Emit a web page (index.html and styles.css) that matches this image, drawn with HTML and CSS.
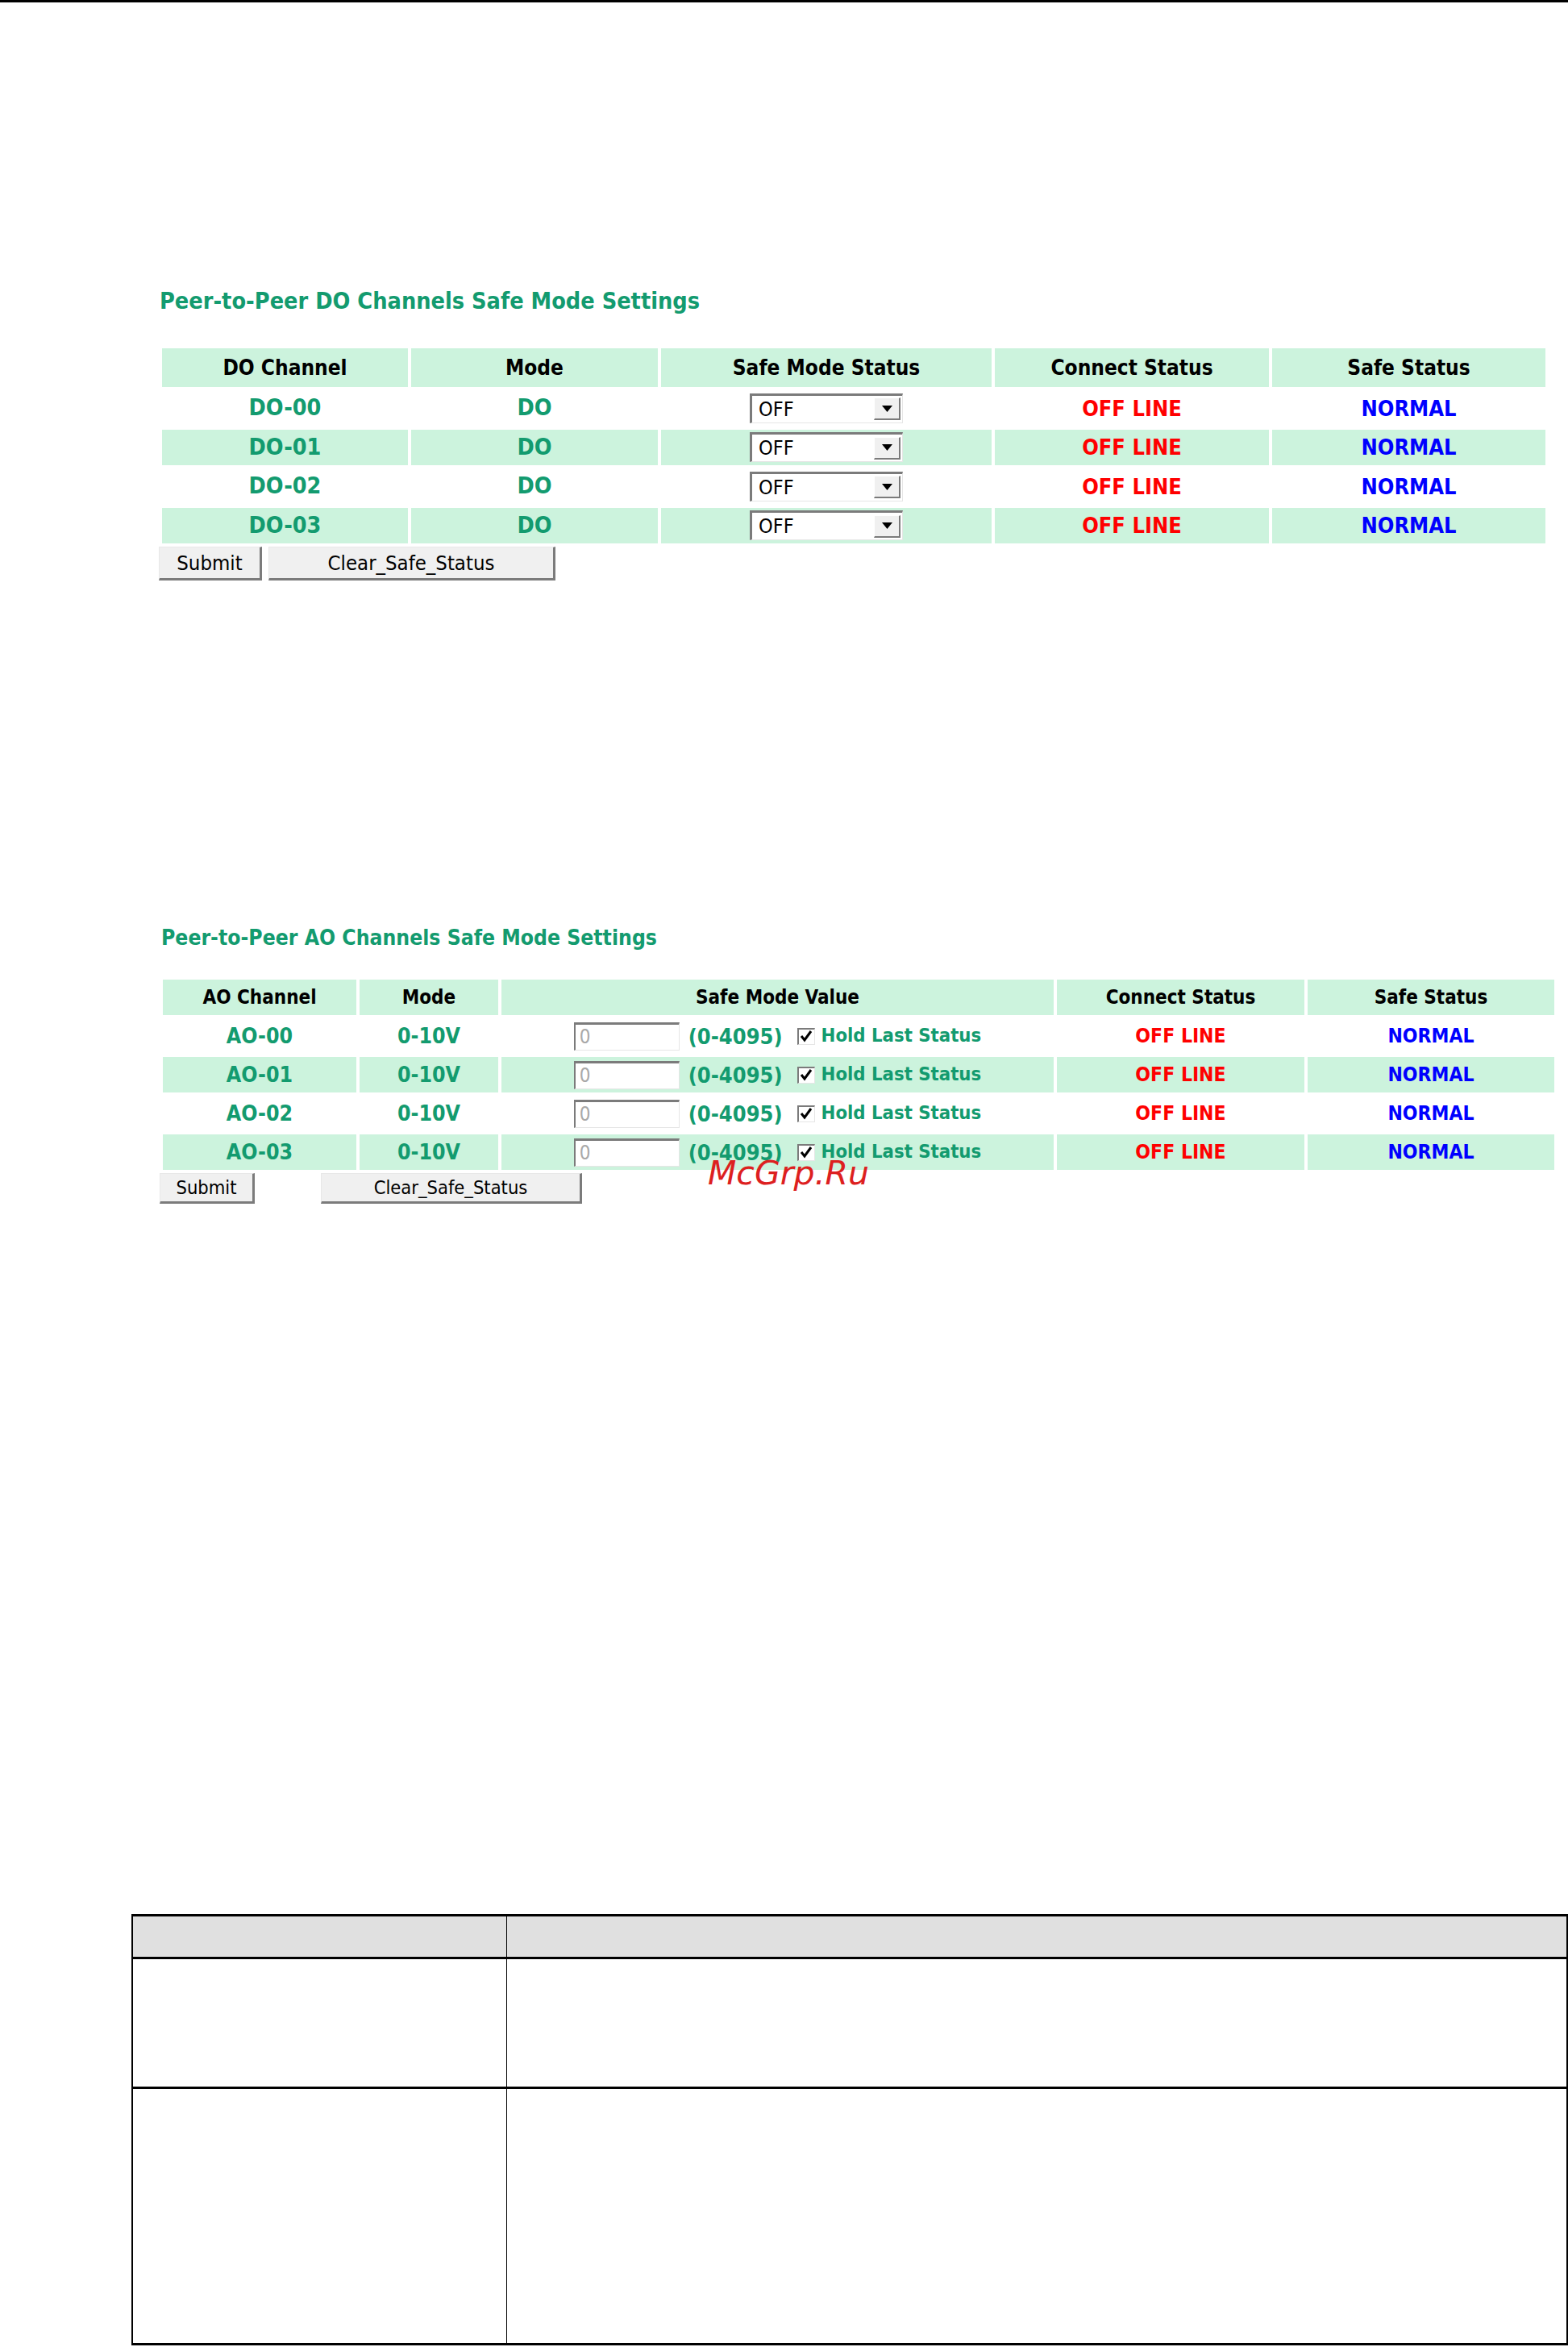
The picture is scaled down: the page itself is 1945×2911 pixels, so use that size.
FILE: index.html
```html
<!DOCTYPE html>
<html lang="en">
<head>
<meta charset="utf-8">
<title>Peer-to-Peer Safe Mode Settings</title>
<link rel="stylesheet" href="styles.css">
</head>
<body>
<div class="topline"></div>

<section class="do-section">
  <h2 class="title title-do">Peer-to-Peer DO Channels Safe Mode Settings</h2>
  <table class="grid grid-do">
    <thead>
      <tr>
        <th class="c1">DO Channel</th>
        <th class="c2">Mode</th>
        <th class="c3">Safe Mode Status</th>
        <th class="c4">Connect Status</th>
        <th class="c5">Safe Status</th>
      </tr>
    </thead>
    <tbody>
      <tr>
        <td class="g">DO-00</td><td class="g">DO</td>
        <td><span class="select"><span class="sel-text">OFF</span><span class="sel-btn"><svg width="13" height="8" viewBox="0 0 13 8"><path d="M0 0H13L6.5 8Z" fill="#000"/></svg></span></span></td>
        <td class="r">OFF LINE</td><td class="b">NORMAL</td>
      </tr>
      <tr class="alt">
        <td class="g">DO-01</td><td class="g">DO</td>
        <td><span class="select"><span class="sel-text">OFF</span><span class="sel-btn"><svg width="13" height="8" viewBox="0 0 13 8"><path d="M0 0H13L6.5 8Z" fill="#000"/></svg></span></span></td>
        <td class="r">OFF LINE</td><td class="b">NORMAL</td>
      </tr>
      <tr>
        <td class="g">DO-02</td><td class="g">DO</td>
        <td><span class="select"><span class="sel-text">OFF</span><span class="sel-btn"><svg width="13" height="8" viewBox="0 0 13 8"><path d="M0 0H13L6.5 8Z" fill="#000"/></svg></span></span></td>
        <td class="r">OFF LINE</td><td class="b">NORMAL</td>
      </tr>
      <tr class="alt">
        <td class="g">DO-03</td><td class="g">DO</td>
        <td><span class="select"><span class="sel-text">OFF</span><span class="sel-btn"><svg width="13" height="8" viewBox="0 0 13 8"><path d="M0 0H13L6.5 8Z" fill="#000"/></svg></span></span></td>
        <td class="r">OFF LINE</td><td class="b">NORMAL</td>
      </tr>
    </tbody>
  </table>
  <div class="buttons buttons-do">
    <button class="btn btn-submit-do">Submit</button>
    <button class="btn btn-clear-do">Clear_Safe_Status</button>
  </div>
</section>

<section class="ao-section">
  <h2 class="title title-ao">Peer-to-Peer AO Channels Safe Mode Settings</h2>
  <table class="grid grid-ao">
    <thead>
      <tr>
        <th class="a1">AO Channel</th>
        <th class="a2">Mode</th>
        <th class="a3">Safe Mode Value</th>
        <th class="a4">Connect Status</th>
        <th class="a5">Safe Status</th>
      </tr>
    </thead>
    <tbody>
      <tr>
        <td class="g">AO-00</td><td class="g">0-10V</td>
        <td><span class="value"><span class="input">0</span><span class="range">(0-4095)</span><span class="check"><svg width="22" height="21" viewBox="0 0 22 21"><path d="M5 10 L9 15 L17 4" fill="none" stroke="#000" stroke-width="3"/></svg></span><span class="hold">Hold Last Status</span></span></td>
        <td class="r">OFF LINE</td><td class="b">NORMAL</td>
      </tr>
      <tr class="alt">
        <td class="g">AO-01</td><td class="g">0-10V</td>
        <td><span class="value"><span class="input">0</span><span class="range">(0-4095)</span><span class="check"><svg width="22" height="21" viewBox="0 0 22 21"><path d="M5 10 L9 15 L17 4" fill="none" stroke="#000" stroke-width="3"/></svg></span><span class="hold">Hold Last Status</span></span></td>
        <td class="r">OFF LINE</td><td class="b">NORMAL</td>
      </tr>
      <tr>
        <td class="g">AO-02</td><td class="g">0-10V</td>
        <td><span class="value"><span class="input">0</span><span class="range">(0-4095)</span><span class="check"><svg width="22" height="21" viewBox="0 0 22 21"><path d="M5 10 L9 15 L17 4" fill="none" stroke="#000" stroke-width="3"/></svg></span><span class="hold">Hold Last Status</span></span></td>
        <td class="r">OFF LINE</td><td class="b">NORMAL</td>
      </tr>
      <tr class="alt">
        <td class="g">AO-03</td><td class="g">0-10V</td>
        <td><span class="value"><span class="input">0</span><span class="range">(0-4095)</span><span class="check"><svg width="22" height="21" viewBox="0 0 22 21"><path d="M5 10 L9 15 L17 4" fill="none" stroke="#000" stroke-width="3"/></svg></span><span class="hold">Hold Last Status</span></span></td>
        <td class="r">OFF LINE</td><td class="b">NORMAL</td>
      </tr>
    </tbody>
  </table>
  <div class="buttons buttons-ao">
    <button class="btn btn-submit-ao">Submit</button>
    <button class="btn btn-clear-ao">Clear_Safe_Status</button>
  </div>
  <div class="watermark">McGrp.Ru</div>
</section>

<div class="spec">
  <div class="spec-row spec-head">
    <div class="spec-c1"></div>
    <div class="spec-c2"></div>
  </div>
  <div class="spec-row spec-r1">
    <div class="spec-c1"></div>
    <div class="spec-c2"></div>
  </div>
  <div class="spec-row spec-r2">
    <div class="spec-c1"></div>
    <div class="spec-c2"></div>
  </div>
</div>
</body>
</html>
```

FILE: styles.css
```css
html, body {
  margin: 0;
  padding: 0;
  background: #ffffff;
}
body {
  font-family: "DejaVu Sans Condensed", "DejaVu Sans", sans-serif;
  font-stretch: condensed;
  color: #000;
  width: 1945px;
}
.topline {
  height: 3px;
  background: #000;
}

.title {
  margin: 0;
  font-weight: bold;
  color: #139b6f;
  white-space: nowrap;
}
.title-do {
  margin: 353px 0 0 198px;
  font-size: 28.6px;
  line-height: 34px;
}
.title-ao {
  margin: 427px 0 0 200px;
  font-size: 26.3px;
  line-height: 32px;
}

.grid {
  border-collapse: separate;
  border-spacing: 4px;
  table-layout: fixed;
}
.grid th, .grid td {
  padding: 0;
  text-align: center;
  vertical-align: middle;
  white-space: nowrap;
  line-height: 1;
}
.grid th {
  background: #ccf3dd;
  font-weight: bold;
  color: #000;
}
.grid td {
  font-weight: bold;
}
.grid tr.alt td {
  background: #ccf3dd;
}

.grid-do {
  margin: 38px 0 0 197px;
  width: 1724px;
}
.grid-do th { height: 48px; font-size: 26px; }
.grid-do td { height: 44.5px; font-size: 27px; }
.grid-do td.g { font-size: 28.5px; }
.c1 { width: 305px; }
.c2 { width: 306px; }
.c3 { width: 410px; }
.c4 { width: 340px; }
.c5 { width: 339px; }

.grid-ao {
  margin: 32px 0 0 198px;
  width: 1734px;
}
.grid-ao th { height: 44px; font-size: 24px; }
.grid-ao td { height: 44px; font-size: 24.5px; }
.grid-ao td.g { font-size: 26.5px; }
.a1 { width: 240px; }
.a2 { width: 172px; }
.a3 { width: 685px; }
.a4 { width: 307px; }
.a5 { width: 306px; }

.g { color: #139b6f; }
.r { color: #ff0000; }
.b { color: #0000ff; }

/* fake select */
.select {
  display: inline-flex;
  align-items: center;
  box-sizing: border-box;
  width: 190px;
  height: 37px;
  vertical-align: middle;
  background: #fff;
  border-style: solid;
  border-width: 3px 1px 1px 3px;
  border-color: #7b7b7b #e6e6e6 #e6e6e6 #7b7b7b;
}
.sel-text {
  padding-left: 8px;
  font-weight: normal;
  font-size: 25px;
  color: #000;
}
.sel-btn {
  margin-left: auto;
  margin-right: 2px;
  box-sizing: border-box;
  width: 33px;
  height: 28px;
  display: flex;
  align-items: center;
  justify-content: center;
  background: #f0f0f0;
  border-style: solid;
  border-width: 1px 2px 2px 1px;
  border-color: #ffffff #7b7b7b #7b7b7b #ffffff;
}

/* AO value cell */
.value {
  display: inline-flex;
  align-items: center;
  vertical-align: middle;
}
.input {
  box-sizing: border-box;
  width: 131px;
  height: 35px;
  display: inline-flex;
  align-items: center;
  padding-left: 5px;
  background: #fff;
  border-style: solid;
  border-width: 3px 1px 1px 2px;
  border-color: #7b7b7b #e6e6e6 #e6e6e6 #7b7b7b;
  color: #a9a9a9;
  font-weight: normal;
  font-size: 24px;
  text-align: left;
}
.range {
  margin-left: 11px;
  color: #139b6f;
  font-size: 27px;
}
.check {
  margin-left: 18px;
  box-sizing: border-box;
  width: 22px;
  height: 21px;
  display: inline-flex;
  background: #fff;
  border-style: solid;
  border-width: 2px 1px 1px 2px;
  border-color: #7b7b7b #e6e6e6 #e6e6e6 #7b7b7b;
  overflow: hidden;
}
.check svg {
  margin: -2px 0 0 -2px;
  flex: none;
}
.hold {
  margin-left: 8px;
  color: #139b6f;
  font-size: 23.7px;
}

/* buttons */
.buttons {
  display: flex;
  align-items: flex-start;
}
.buttons-do {
  margin-left: 197px;
  gap: 8px;
}
.buttons-ao {
  margin-left: 198px;
  gap: 82px;
}
.btn {
  box-sizing: border-box;
  margin: 0;
  padding: 0;
  background: #f0f0f0;
  color: #000;
  font-family: "DejaVu Sans Condensed", "DejaVu Sans", sans-serif;
  font-stretch: condensed;
  font-weight: normal;
  border-style: solid;
  border-width: 1px 3px 3px 1px;
  border-color: #e8e8e8 #7b7b7b #7b7b7b #e8e8e8;
  border-radius: 0;
}
.btn-submit-do { width: 128px; height: 42px; font-size: 25.5px; }
.btn-clear-do { width: 356px; height: 42px; font-size: 25.5px; }
.btn-submit-ao { width: 118px; height: 38px; font-size: 23.5px; }
.btn-clear-ao { width: 324px; height: 38px; font-size: 23.5px; }

.ao-section {
  position: relative;
}
.watermark {
  position: absolute;
  left: 878px;
  top: 288px;
  font-family: "DejaVu Sans", sans-serif;
  font-stretch: normal;
  font-style: oblique;
  font-size: 41px;
  line-height: 40px;
  color: #dd2020;
  white-space: nowrap;
}

/* bottom spec table */
.spec {
  margin: 881px 0 0 163px;
  width: 1782px;
  box-sizing: border-box;
  border-top: 3px solid #000;
  border-left: 2px solid #000;
  border-right: 2px solid #000;
}
.spec-row {
  display: grid;
  grid-template-columns: 464px 1fr;
  border-bottom: 3px solid #000;
}
.spec-c1 {
  border-right: 1px solid #000;
}
.spec-head {
  height: 50px;
  background: #e0e0e0;
}
.spec-r1 { height: 158px; }
.spec-r2 { height: 315px; }
```
